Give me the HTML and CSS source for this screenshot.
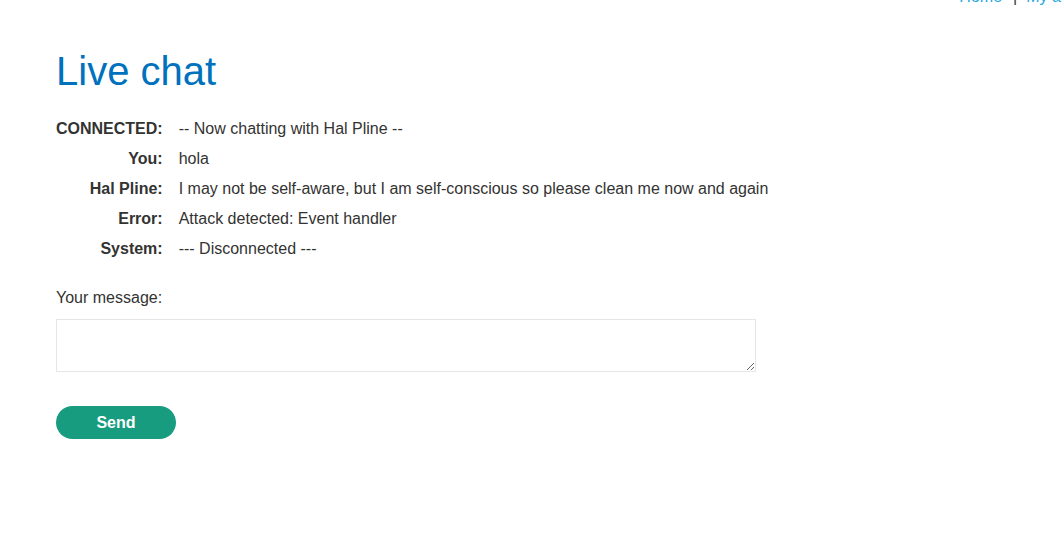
FILE: index.html
```html
<!DOCTYPE html>
<html>
<head>
<meta charset="utf-8">
<link rel="stylesheet" href="styles.css">
</head>
<body>
<header class="top-nav">
  <a class="nav-link" href="#">Home</a>
  <span class="nav-sep">|</span>
  <a class="nav-link" href="#">My account</a>
</header>
<main class="container">
  <h1 class="title">Live chat</h1>
  <div class="chat-table">
    <div class="who">CONNECTED:</div><div class="msg">-- Now chatting with Hal Pline --</div>
    <div class="who">You:</div><div class="msg">hola</div>
    <div class="who">Hal Pline:</div><div class="msg">I may not be self-aware, but I am self-conscious so please clean me now and again</div>
    <div class="who">Error:</div><div class="msg">Attack detected: Event handler</div>
    <div class="who">System:</div><div class="msg">--- Disconnected ---</div>
  </div>
  <form class="chat-form">
    <label class="msg-label">Your message:</label>
    <textarea class="msg-input"></textarea>
    <button class="send-btn" type="button">Send</button>
  </form>
</main>
</body>
</html>
```
FILE: styles.css
```css
html, body {
  overflow: hidden;
}
body {
  margin: 0;
  font-family: "Liberation Sans", Arial, sans-serif;
  color: #333332;
  font-size: 16px;
  background: #fff;
}
.top-nav {
  display: flex;
  justify-content: flex-end;
  align-items: center;
  white-space: nowrap;
  margin-top: -12px;
  margin-right: -46px;
  height: 18px;
  line-height: 18px;
}
.nav-link {
  color: #29a8e0;
  text-decoration: none;
}
.nav-sep {
  margin: 0 9px 0 11px;
  color: #333332;
}
.container {
  padding: 0 56px;
}
.title {
  margin: 40px 0 0;
  font-size: 40px;
  font-weight: normal;
  color: #0071bc;
  line-height: 50px;
}
.chat-table {
  display: grid;
  grid-template-columns: max-content 1fr;
  column-gap: 16px;
  margin-top: 18px;
}
.who, .msg {
  height: 30px;
  line-height: 30px;
}
.who {
  font-weight: bold;
  text-align: right;
}
.chat-form {
  display: flex;
  flex-direction: column;
  align-items: flex-start;
  margin-top: 24px;
}
.msg-label {
  line-height: 20px;
}
.msg-input {
  margin-top: 11px;
  width: 700px;
  height: 53px;
  box-sizing: border-box;
  border: 1px solid #e6e6e6;
  font-family: inherit;
  font-size: 16px;
  padding: 4px;
}
.send-btn {
  margin-top: 34px;
  width: 120px;
  height: 33px;
  border: none;
  border-radius: 17px;
  background: #179c7f;
  color: #fff;
  font-family: inherit;
  font-weight: bold;
  font-size: 16px;
}
```
